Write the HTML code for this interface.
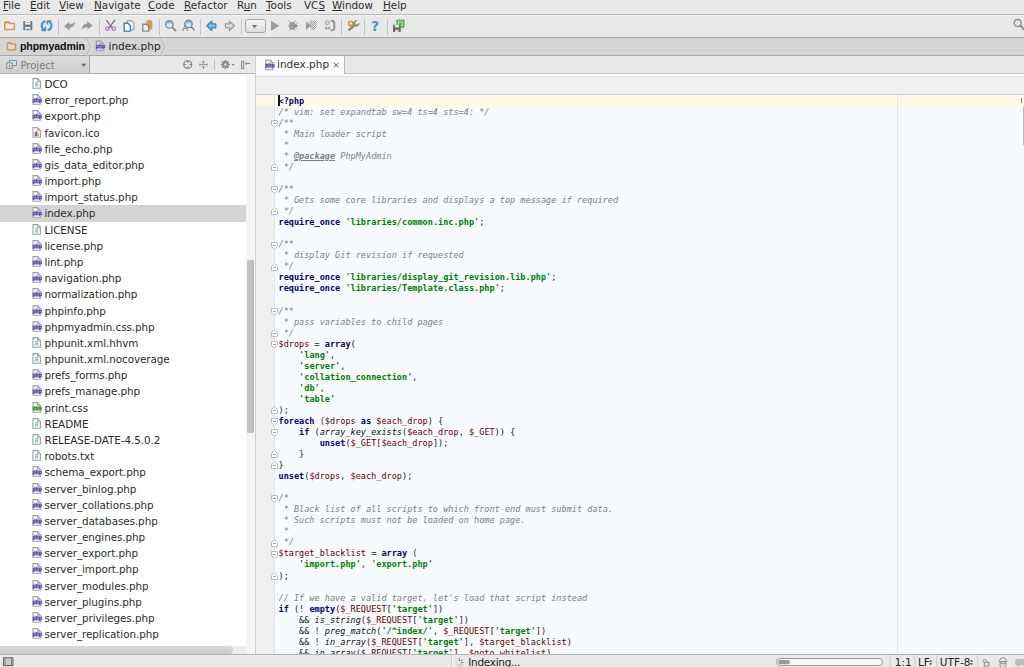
<!DOCTYPE html>
<html lang="en"><head><meta charset="utf-8"><title>phpmyadmin - index.php - PhpStorm</title>
<style>
*{box-sizing:border-box;margin:0;padding:0}
html,body{width:1024px;height:667px;overflow:hidden}
body{position:relative;background:#e8e8e8;font-family:"DejaVu Sans","Liberation Sans",sans-serif;font-size:10.5px;color:#1c1c1c}
.abs{position:absolute}
#menubar{position:absolute;left:0;top:0;width:1024px;height:15px;background:#e9e9e9;border-bottom:1px solid #b9b9b9}
.mi{position:absolute;top:-2.5px;font-size:10.4px;line-height:14px;color:#2e2e2e;white-space:nowrap}
.mi u{text-decoration:underline;text-underline-offset:1px}
#toolbar{position:absolute;left:0;top:15px;width:1024px;height:23px;background:#e9e9e9;border-top:1px solid #f4f4f4;border-bottom:1px solid #a8a8a8}
.tsep{position:absolute;top:3px;width:1px;height:16px;background:#c6c6c6}
.ti{position:absolute;top:5px}
#navbar{position:absolute;left:0;top:38px;width:1024px;height:18px;background:#d4d4d4;border-bottom:1px solid #a6a6a6}
#navbar span{position:absolute;top:0;line-height:16px;white-space:nowrap}
#phead{position:absolute;left:0;top:56px;width:256px;height:18px;background:#e8e8e8;border-bottom:1px solid #b4b4b4}
#ptab{position:absolute;left:0;top:0;width:90px;height:17px;background:linear-gradient(#dcdcdc,#cfcfcf);border-right:1px solid #a9a9a9}
#ptab span{position:absolute;left:20.5px;top:1px;line-height:17px;font-size:10px;color:#7c7c7c}
#tree{position:absolute;left:0;top:74px;width:246px;height:572px;background:#fff;overflow:hidden}
.row{position:absolute;left:0;width:246px;height:16.2px;margin-top:-74px;white-space:nowrap}
.row.sel{background:#d4d4d4}
.fi{position:absolute;left:31.6px;top:2px}
.fn{position:absolute;left:44.5px;top:0;line-height:16px;font-size:10.4px;letter-spacing:-.08px;color:#2c2c2c}
#vscroll{position:absolute;left:246px;top:74px;width:9px;height:580px;background:#f5f5f5}
#vthumb{position:absolute;left:.7px;top:186px;width:7.4px;height:173px;background:linear-gradient(90deg,#c6c6c6,#b9b9b9);border-radius:1px}
#hscroll{position:absolute;left:0;top:646px;width:246px;height:8px;background:#ececec}
#hthumb{position:absolute;left:0;top:0;width:233px;height:8px;background:linear-gradient(#dadada,#cbcbcb);border-radius:0 4px 4px 0}
#split{position:absolute;left:255px;top:56px;width:1px;height:598px;background:#cfcfcf}
#tabs{position:absolute;left:256px;top:56px;width:768px;height:18px;background:#e8e8e8;border-bottom:1px solid #c3c3c3}
#tab1{position:absolute;left:0;top:0;width:89px;height:18px;background:#fcfcfc;z-index:2;border-right:1px solid #b9b9b9}
#tab1 span{position:absolute;left:21px;top:0;line-height:17px;color:#333}
#edtop{position:absolute;left:256px;top:74px;width:768px;height:21px;background:linear-gradient(#f8f8f8 0,#f8f8f8 2px,#e4e4e4 2px,#e4e4e4 3px,#f0f0f0 3px);border-bottom:1px solid #d0d0d0}
#editor{position:absolute;left:256px;top:95px;width:768px;height:559px;background:#f7faff;overflow:hidden}
#gutter{position:absolute;left:0;top:0;width:19px;height:559px;background:#f0f0f0;border-right:1px solid #e3e3e3}
#curline{position:absolute;left:0;top:0;width:768px;height:11px;background:#fffae3}
#curgut{position:absolute;left:0;top:0;width:18px;height:11px;background:#fdf6e0}
#caret{position:absolute;left:22px;top:0;width:2px;height:11px;background:#111}
#margin{position:absolute;left:641px;top:0;width:1px;height:559px;background:#e6e6ea}
.cl{position:absolute;left:22.5px;height:11px;line-height:11px;white-space:pre;font-family:"DejaVu Sans Mono","Liberation Mono",monospace;font-size:8.55px;color:#1a1a1a}
.cl b.k{color:#000080}
.cl b.s{color:#008000}
.cl i.c{color:#808080}
.cl i.c b.t{text-decoration:underline}
.cl .v{color:#660000}
.cl i.f{color:#111}
.fold{position:absolute;left:15px;margin-top:.2px}
#status{position:absolute;left:0;top:654px;width:1024px;height:13px;background:#e9e9e9;border-top:1px solid #b4b4b4}
#status span{position:absolute;top:0px;line-height:14px;font-size:10.5px;color:#222;white-space:nowrap}
</style></head><body>
<div id="menubar">
<span class="mi" style="left:3px"><u>F</u>ile</span>
<span class="mi" style="left:30px"><u>E</u>dit</span>
<span class="mi" style="left:59px"><u>V</u>iew</span>
<span class="mi" style="left:94px"><u>N</u>avigate</span>
<span class="mi" style="left:148px"><u>C</u>ode</span>
<span class="mi" style="left:184px"><u>R</u>efactor</span>
<span class="mi" style="left:237px">R<u>u</u>n</span>
<span class="mi" style="left:266px"><u>T</u>ools</span>
<span class="mi" style="left:304px">VC<u>S</u></span>
<span class="mi" style="left:332px"><u>W</u>indow</span>
<span class="mi" style="left:383px"><u>H</u>elp</span>
</div>
<div id="toolbar">
<i class="tsep" style="left:58px"></i><i class="tsep" style="left:99px"></i><i class="tsep" style="left:159px"></i><i class="tsep" style="left:200px"></i><i class="tsep" style="left:241px"></i><i class="tsep" style="left:341px"></i><i class="tsep" style="left:364px"></i><i class="tsep" style="left:387px"></i>
</div>
<svg id="tbicons" width="1024" height="24" viewBox="0 14 1024 24" style="position:absolute;left:0;top:14px">
<defs>
<linearGradient id="lens" x1="0" y1="0" x2="0" y2="1"><stop offset="0" stop-color="#4fa6e6"/><stop offset=".55" stop-color="#cfe6f8"/><stop offset="1" stop-color="#f4f8fc"/></linearGradient>
<linearGradient id="cb" x1="0" y1="0" x2="0" y2="1"><stop offset="0" stop-color="#f6f6f6"/><stop offset="1" stop-color="#dcdcdc"/></linearGradient>
<pattern id="chk" width="2" height="2" patternUnits="userSpaceOnUse"><rect width="1" height="1" fill="#999"/><rect x="1" y="1" width="1" height="1" fill="#999"/></pattern>
</defs>
<!-- open folder -->
<path d="M4.8 22h4.2l1 1.6h4.4v6h-9.6z" fill="#f1eeea" stroke="#d19a55" stroke-width="1.5" stroke-linejoin="round"/>
<path d="M4.8 21.6h4.4l.9 1.8h-5.3z" fill="#d19a55"/>
<!-- save -->
<path d="M23.3 21h9v9.2h-9z" fill="#7c7c7c"/>
<rect x="25.3" y="21" width="5" height="3.6" fill="#f1f1f1"/>
<rect x="26.8" y="22" width="2" height="1" fill="#8a8a8a"/>
<rect x="25.3" y="27" width="5" height="3.2" fill="#e9f1f8"/>
<rect x="26.2" y="28.6" width="3.2" height="1.6" fill="#3f97dd"/>
<!-- sync -->
<g fill="none" stroke="#4293cb" stroke-width="2">
<path d="M45.400 21.300a4.500 4.500 0 0 0 -.6 8.700"/>
<path d="M47.600 30.100a4.500 4.500 0 0 0 .8 -8.700"/>
</g>
<path d="M46.600 20.200h4.800v1.900h-3.100v2.500h-1.700z" fill="#4293cb"/>
<path d="M46.200 31.200h-4.800v-1.900h3.100v-2.500h1.700z" fill="#4293cb"/>
<!-- undo -->
<path id="undo" d="M64.100 26.200l5.100-4.200v2.300c2.300 0 4.300-.8 5.550-2.500c.15 3.700-1.950 6.100-5.350 6.200l.2 2.400z" fill="#9b9b9b"/>
<path d="M64.100 26.200l5.100-4.200v2.300c2.300 0 4.300-.8 5.550-2.500c.15 3.700-1.950 6.100-5.350 6.200l.2 2.400z" fill="#9b9b9b" transform="rotate(180 78.400 25.800)"/>
<!-- cut -->
<g fill="none" stroke="#6c6c6c" stroke-width="1.150" stroke-linecap="round">
<path d="M106.600 20.300l6 8"/><path d="M114.600 20.300l-6 8"/>
</g>
<g fill="none" stroke="#b877cc" stroke-width="1.300">
<circle cx="107.400" cy="28.600" r="1.800"/><circle cx="113.800" cy="28.600" r="1.800"/>
</g>
<!-- copy -->
<path d="M127.500 20.800h4l2.400 2.400v6.400h-6.400z" fill="#f5f5f5" stroke="#9a9a9a" stroke-width="1.100"/>
<path d="M124.200 23.300h3.800l2.400 2.400v5.400h-6.200z" fill="#fdfdfd" stroke="#3b80b6" stroke-width="1.400"/>
<!-- paste -->
<path d="M146.300 20.800h6v8.600h-6z" fill="#d69a48"/>
<rect x="148" y="19.900" width="2.800" height="1.500" fill="#a7a7a7"/>
<path d="M142.800 24.300h3.600l2.300 2.300v4.500h-5.900z" fill="#f4f4f4" stroke="#8b8b8b" stroke-width="1.400"/>
<!-- find -->
<path d="M172.600 27.600l3 3" stroke="#8a8a8a" stroke-width="2" stroke-linecap="round"/>
<circle cx="169.400" cy="24.400" r="3.700" fill="url(#lens)" stroke="#8a8a8a" stroke-width="1.400"/>
<!-- replace -->
<path d="M191.300 26.900l2.600 2.600" stroke="#8a8a8a" stroke-width="1.800" stroke-linecap="round"/>
<circle cx="188.500" cy="23.900" r="3.600" fill="url(#lens)" stroke="#8a8a8a" stroke-width="1.400"/>
<text x="182.300" y="31.400" font-size="8.500" font-family="Liberation Sans, sans-serif" fill="#5a5a5a">A</text>
<!-- back / forward -->
<path d="M206.900 25.800l4.800-4.600v2.700h4.100v3.900h-4.100v2.700z" fill="#7cbdea" stroke="#2f86c6" stroke-width="1.300" stroke-linejoin="round"/>
<path d="M234.300 25.800l-4.800-4.600v2.700h-4.100v3.900h4.100v2.700z" fill="#dedede" stroke="#9a9a9a" stroke-width="1.300" stroke-linejoin="round"/>
<!-- combobox -->
<rect x="245.500" y="19.500" width="20" height="13" rx="2.200" fill="url(#cb)" stroke="#a6a6a6"/>
<path d="M251.900 25.100h5.300l-2.650 3.100z" fill="#767676"/>
<!-- run -->
<path d="M271 20.600l8.200 5.250l-8.200 5.250z" fill="#9c9c9c"/>
<!-- debug -->
<g fill="#9b9b9b" stroke="#9b9b9b">
<ellipse cx="292.400" cy="26" rx="3.300" ry="3.900" stroke="none"/>
<circle cx="295.600" cy="25.800" r="1.700" stroke="none" fill="#8c8c8c"/>
<g fill="none" stroke-width=".9"><path d="M290.500 23l-1.800-2.200M294 22.700l1.600-2.200M289.300 26h-1.500M290.500 29l-1.600 1.600M294.200 29.300l1.300 1.400M296.500 23.800l1.600-1.200M296.500 28l1.600 1.200M297.300 25.900h1"/></g>
</g>
<!-- coverage -->
<path d="M305.900 21.500l5.200 4.100l-5.200 4.100z" fill="#999"/>
<path d="M309.500 20.600h7.200v5.500q-.5 3.300-3.600 4.400q-3.100-1.100-3.600-4.400z" fill="url(#chk)"/>
<!-- listen -->
<g fill="none" stroke="#a2a2a2">
<circle cx="327.200" cy="22.600" r="2.100" stroke-width="1"/>
<path d="M326.300 22.600l.8.800l1.200-1.600" stroke-width=".8"/>
<path d="M330.800 21h1.400q2.100.3 2.100 2.300v4.600q0 2-2.100 2.300h-1.400" stroke-width="2.200" stroke="#9a9a9a"/>
<path d="M325 28.200h5M326.600 26.700l-1.600 1.500l1.600 1.500M328.600 26.700l1.600 1.500l-1.600 1.500" stroke-width="1" stroke="#8f8f8f"/>
</g>
<!-- settings wrench -->
<path d="M349.300 31.300l-1.500-1.500l5.300-5.200q-.7-2.400 1-3.700q1.500-1 3.100-.5l-2 2l.5 1.600l1.600.5l2-2q.6 1.700-.6 3.100q-1.400 1.500-3.600 1z" fill="#8b8b8b"/>
<circle cx="350.700" cy="23.400" r="2.200" fill="#f2e6d4" stroke="#d39239" stroke-width="1.500"/>
<!-- help -->
<text x="371" y="30.800" font-size="14" font-weight="bold" font-family="DejaVu Sans, Liberation Sans, sans-serif" fill="#4293cb">?</text>
<!-- last -->
<rect x="396.800" y="20.200" width="7.200" height="7.200" fill="#4fae50"/>
<g stroke="#4fae50" stroke-width="1" stroke-dasharray="1 1"><path d="M396.800 19.700h7.200M396.800 27.900h7.200M396.300 20.200v7.200M404.500 20.200v7.200"/></g>
<rect x="398.600" y="22" width="3.600" height="3.600" fill="none" stroke="#d5f0d5" stroke-width=".9"/>
<rect x="393" y="24.800" width="7.800" height="7.200" fill="#6a6a6a"/>
<rect x="394.800" y="24.800" width="4.200" height="2.600" fill="#e9e9e9"/>
<rect x="395.200" y="29.800" width="3.400" height="2.200" fill="#dcdcdc"/>
<!-- search everywhere -->
<circle cx="1017.700" cy="22.900" r="3.500" fill="none" stroke="#8c8c8c" stroke-width="1.500"/>
<path d="M1020.300 25.600l4.500 4.500" stroke="#8c8c8c" stroke-width="2"/>
</svg>

<div id="navbar">
<span style="left:20px;font-family:'Liberation Sans',sans-serif;font-weight:bold;color:#111;font-size:10.6px;letter-spacing:-.1px">phpmyadmin</span>
<span style="left:108.5px;color:#222">index.php</span>
</div>
<div id="phead"><div id="ptab"><span>Project</span></div></div>
<div id="tree">
<div class="row" style="top:76.00px"><svg class="fi" width="11" height="12" viewBox="0 0 11 12"><path d="M1 .6h4.6l2.800 2.800v6.900h-7.400z" fill="#fdfdfd" stroke="#9e9e9e" stroke-width="1.100"/><path d="M5.600 .6v2.800h2.800" fill="none" stroke="#9e9e9e" stroke-width=".9"/><path d="M3 4.700h3.400M3 6.300h3.400M3 7.900h3.400" stroke="#58a6dc" stroke-width=".9"/></svg><span class="fn">DCO</span></div>
<div class="row" style="top:92.18px"><svg class="fi" width="11" height="12" viewBox="0 0 11 12"><path d="M1 .6h4.6l2.800 2.800v6.900h-7.400z" fill="#fdfdfd" stroke="#9e9e9e" stroke-width="1.100"/><path d="M5.600 .6v2.800h2.800" fill="none" stroke="#9e9e9e" stroke-width=".9"/><rect x=".5" y="3.800" width="9.500" height="5" fill="#b5a9f3"/><text x="5.200" y="7.900" font-size="5.200" font-weight="bold" text-anchor="middle" fill="#3b2c86" font-family="Liberation Sans, sans-serif">php</text></svg><span class="fn">error_report.php</span></div>
<div class="row" style="top:108.36px"><svg class="fi" width="11" height="12" viewBox="0 0 11 12"><path d="M1 .6h4.6l2.800 2.800v6.900h-7.400z" fill="#fdfdfd" stroke="#9e9e9e" stroke-width="1.100"/><path d="M5.600 .6v2.800h2.800" fill="none" stroke="#9e9e9e" stroke-width=".9"/><rect x=".5" y="3.800" width="9.500" height="5" fill="#b5a9f3"/><text x="5.200" y="7.900" font-size="5.200" font-weight="bold" text-anchor="middle" fill="#3b2c86" font-family="Liberation Sans, sans-serif">php</text></svg><span class="fn">export.php</span></div>
<div class="row" style="top:124.54px"><svg class="fi" width="11" height="12" viewBox="0 0 11 12"><path d="M1 .6h4.6l2.800 2.800v6.900h-7.400z" fill="#fdfdfd" stroke="#9e9e9e" stroke-width="1.100"/><path d="M5.600 .6v2.800h2.800" fill="none" stroke="#9e9e9e" stroke-width=".9"/><rect x="2.600" y="5" width="1.400" height="4.200" fill="#4a82c4"/><rect x="4" y="4.200" width="1.400" height="5" fill="#d8502c"/><rect x="5.400" y="5.600" width="1.300" height="3.600" fill="#eaa23c"/></svg><span class="fn">favicon.ico</span></div>
<div class="row" style="top:140.72px"><svg class="fi" width="11" height="12" viewBox="0 0 11 12"><path d="M1 .6h4.6l2.800 2.800v6.900h-7.400z" fill="#fdfdfd" stroke="#9e9e9e" stroke-width="1.100"/><path d="M5.600 .6v2.800h2.800" fill="none" stroke="#9e9e9e" stroke-width=".9"/><rect x=".5" y="3.800" width="9.500" height="5" fill="#b5a9f3"/><text x="5.200" y="7.900" font-size="5.200" font-weight="bold" text-anchor="middle" fill="#3b2c86" font-family="Liberation Sans, sans-serif">php</text></svg><span class="fn">file_echo.php</span></div>
<div class="row" style="top:156.90px"><svg class="fi" width="11" height="12" viewBox="0 0 11 12"><path d="M1 .6h4.6l2.800 2.800v6.900h-7.400z" fill="#fdfdfd" stroke="#9e9e9e" stroke-width="1.100"/><path d="M5.600 .6v2.800h2.800" fill="none" stroke="#9e9e9e" stroke-width=".9"/><rect x=".5" y="3.800" width="9.500" height="5" fill="#b5a9f3"/><text x="5.200" y="7.900" font-size="5.200" font-weight="bold" text-anchor="middle" fill="#3b2c86" font-family="Liberation Sans, sans-serif">php</text></svg><span class="fn">gis_data_editor.php</span></div>
<div class="row" style="top:173.08px"><svg class="fi" width="11" height="12" viewBox="0 0 11 12"><path d="M1 .6h4.6l2.800 2.800v6.900h-7.400z" fill="#fdfdfd" stroke="#9e9e9e" stroke-width="1.100"/><path d="M5.600 .6v2.800h2.800" fill="none" stroke="#9e9e9e" stroke-width=".9"/><rect x=".5" y="3.800" width="9.500" height="5" fill="#b5a9f3"/><text x="5.200" y="7.900" font-size="5.200" font-weight="bold" text-anchor="middle" fill="#3b2c86" font-family="Liberation Sans, sans-serif">php</text></svg><span class="fn">import.php</span></div>
<div class="row" style="top:189.26px"><svg class="fi" width="11" height="12" viewBox="0 0 11 12"><path d="M1 .6h4.6l2.800 2.800v6.900h-7.400z" fill="#fdfdfd" stroke="#9e9e9e" stroke-width="1.100"/><path d="M5.600 .6v2.800h2.800" fill="none" stroke="#9e9e9e" stroke-width=".9"/><rect x=".5" y="3.800" width="9.500" height="5" fill="#b5a9f3"/><text x="5.200" y="7.900" font-size="5.200" font-weight="bold" text-anchor="middle" fill="#3b2c86" font-family="Liberation Sans, sans-serif">php</text></svg><span class="fn">import_status.php</span></div>
<div class="row sel" style="top:205.44px"><svg class="fi" width="11" height="12" viewBox="0 0 11 12"><path d="M1 .6h4.6l2.800 2.800v6.900h-7.400z" fill="#fdfdfd" stroke="#9e9e9e" stroke-width="1.100"/><path d="M5.600 .6v2.800h2.800" fill="none" stroke="#9e9e9e" stroke-width=".9"/><rect x=".5" y="3.800" width="9.500" height="5" fill="#b5a9f3"/><text x="5.200" y="7.900" font-size="5.200" font-weight="bold" text-anchor="middle" fill="#3b2c86" font-family="Liberation Sans, sans-serif">php</text></svg><span class="fn">index.php</span></div>
<div class="row" style="top:221.62px"><svg class="fi" width="11" height="12" viewBox="0 0 11 12"><path d="M1 .6h4.6l2.800 2.800v6.900h-7.400z" fill="#fdfdfd" stroke="#9e9e9e" stroke-width="1.100"/><path d="M5.600 .6v2.800h2.800" fill="none" stroke="#9e9e9e" stroke-width=".9"/><path d="M3 4.700h3.400M3 6.300h3.400M3 7.900h3.400" stroke="#58a6dc" stroke-width=".9"/></svg><span class="fn">LICENSE</span></div>
<div class="row" style="top:237.80px"><svg class="fi" width="11" height="12" viewBox="0 0 11 12"><path d="M1 .6h4.6l2.800 2.800v6.900h-7.400z" fill="#fdfdfd" stroke="#9e9e9e" stroke-width="1.100"/><path d="M5.600 .6v2.800h2.800" fill="none" stroke="#9e9e9e" stroke-width=".9"/><rect x=".5" y="3.800" width="9.500" height="5" fill="#b5a9f3"/><text x="5.200" y="7.900" font-size="5.200" font-weight="bold" text-anchor="middle" fill="#3b2c86" font-family="Liberation Sans, sans-serif">php</text></svg><span class="fn">license.php</span></div>
<div class="row" style="top:253.98px"><svg class="fi" width="11" height="12" viewBox="0 0 11 12"><path d="M1 .6h4.6l2.800 2.800v6.900h-7.400z" fill="#fdfdfd" stroke="#9e9e9e" stroke-width="1.100"/><path d="M5.600 .6v2.800h2.800" fill="none" stroke="#9e9e9e" stroke-width=".9"/><rect x=".5" y="3.800" width="9.500" height="5" fill="#b5a9f3"/><text x="5.200" y="7.900" font-size="5.200" font-weight="bold" text-anchor="middle" fill="#3b2c86" font-family="Liberation Sans, sans-serif">php</text></svg><span class="fn">lint.php</span></div>
<div class="row" style="top:270.16px"><svg class="fi" width="11" height="12" viewBox="0 0 11 12"><path d="M1 .6h4.6l2.800 2.800v6.900h-7.400z" fill="#fdfdfd" stroke="#9e9e9e" stroke-width="1.100"/><path d="M5.600 .6v2.800h2.800" fill="none" stroke="#9e9e9e" stroke-width=".9"/><rect x=".5" y="3.800" width="9.500" height="5" fill="#b5a9f3"/><text x="5.200" y="7.900" font-size="5.200" font-weight="bold" text-anchor="middle" fill="#3b2c86" font-family="Liberation Sans, sans-serif">php</text></svg><span class="fn">navigation.php</span></div>
<div class="row" style="top:286.34px"><svg class="fi" width="11" height="12" viewBox="0 0 11 12"><path d="M1 .6h4.6l2.800 2.800v6.900h-7.400z" fill="#fdfdfd" stroke="#9e9e9e" stroke-width="1.100"/><path d="M5.600 .6v2.800h2.800" fill="none" stroke="#9e9e9e" stroke-width=".9"/><rect x=".5" y="3.800" width="9.500" height="5" fill="#b5a9f3"/><text x="5.200" y="7.900" font-size="5.200" font-weight="bold" text-anchor="middle" fill="#3b2c86" font-family="Liberation Sans, sans-serif">php</text></svg><span class="fn">normalization.php</span></div>
<div class="row" style="top:302.52px"><svg class="fi" width="11" height="12" viewBox="0 0 11 12"><path d="M1 .6h4.6l2.800 2.800v6.900h-7.400z" fill="#fdfdfd" stroke="#9e9e9e" stroke-width="1.100"/><path d="M5.600 .6v2.800h2.800" fill="none" stroke="#9e9e9e" stroke-width=".9"/><rect x=".5" y="3.800" width="9.500" height="5" fill="#b5a9f3"/><text x="5.200" y="7.900" font-size="5.200" font-weight="bold" text-anchor="middle" fill="#3b2c86" font-family="Liberation Sans, sans-serif">php</text></svg><span class="fn">phpinfo.php</span></div>
<div class="row" style="top:318.70px"><svg class="fi" width="11" height="12" viewBox="0 0 11 12"><path d="M1 .6h4.6l2.800 2.800v6.900h-7.400z" fill="#fdfdfd" stroke="#9e9e9e" stroke-width="1.100"/><path d="M5.600 .6v2.800h2.800" fill="none" stroke="#9e9e9e" stroke-width=".9"/><rect x=".5" y="3.800" width="9.500" height="5" fill="#b5a9f3"/><text x="5.200" y="7.900" font-size="5.200" font-weight="bold" text-anchor="middle" fill="#3b2c86" font-family="Liberation Sans, sans-serif">php</text></svg><span class="fn">phpmyadmin.css.php</span></div>
<div class="row" style="top:334.88px"><svg class="fi" width="11" height="12" viewBox="0 0 11 12"><path d="M1 .6h4.6l2.800 2.800v6.900h-7.400z" fill="#fdfdfd" stroke="#9e9e9e" stroke-width="1.100"/><path d="M5.600 .6v2.800h2.800" fill="none" stroke="#9e9e9e" stroke-width=".9"/><path d="M3 4.700h3.400M3 6.300h3.400M3 7.900h3.400" stroke="#58a6dc" stroke-width=".9"/></svg><span class="fn">phpunit.xml.hhvm</span></div>
<div class="row" style="top:351.06px"><svg class="fi" width="11" height="12" viewBox="0 0 11 12"><path d="M1 .6h4.6l2.800 2.800v6.900h-7.400z" fill="#fdfdfd" stroke="#9e9e9e" stroke-width="1.100"/><path d="M5.600 .6v2.800h2.800" fill="none" stroke="#9e9e9e" stroke-width=".9"/><path d="M3 4.700h3.400M3 6.300h3.400M3 7.900h3.400" stroke="#58a6dc" stroke-width=".9"/></svg><span class="fn">phpunit.xml.nocoverage</span></div>
<div class="row" style="top:367.24px"><svg class="fi" width="11" height="12" viewBox="0 0 11 12"><path d="M1 .6h4.6l2.800 2.800v6.900h-7.400z" fill="#fdfdfd" stroke="#9e9e9e" stroke-width="1.100"/><path d="M5.600 .6v2.800h2.800" fill="none" stroke="#9e9e9e" stroke-width=".9"/><rect x=".5" y="3.800" width="9.500" height="5" fill="#b5a9f3"/><text x="5.200" y="7.900" font-size="5.200" font-weight="bold" text-anchor="middle" fill="#3b2c86" font-family="Liberation Sans, sans-serif">php</text></svg><span class="fn">prefs_forms.php</span></div>
<div class="row" style="top:383.42px"><svg class="fi" width="11" height="12" viewBox="0 0 11 12"><path d="M1 .6h4.6l2.800 2.800v6.900h-7.400z" fill="#fdfdfd" stroke="#9e9e9e" stroke-width="1.100"/><path d="M5.600 .6v2.800h2.800" fill="none" stroke="#9e9e9e" stroke-width=".9"/><rect x=".5" y="3.800" width="9.500" height="5" fill="#b5a9f3"/><text x="5.200" y="7.900" font-size="5.200" font-weight="bold" text-anchor="middle" fill="#3b2c86" font-family="Liberation Sans, sans-serif">php</text></svg><span class="fn">prefs_manage.php</span></div>
<div class="row" style="top:399.60px"><svg class="fi" width="11" height="12" viewBox="0 0 11 12"><path d="M1 .6h4.6l2.800 2.800v6.900h-7.400z" fill="#fdfdfd" stroke="#9e9e9e" stroke-width="1.100"/><path d="M5.600 .6v2.800h2.800" fill="none" stroke="#9e9e9e" stroke-width=".9"/><rect x=".5" y="3.800" width="9.500" height="5" fill="#7fcf74"/><text x="5.200" y="7.800" font-size="5.200" font-weight="bold" text-anchor="middle" fill="#1f5e1a" font-family="Liberation Sans, sans-serif">css</text></svg><span class="fn">print.css</span></div>
<div class="row" style="top:415.78px"><svg class="fi" width="11" height="12" viewBox="0 0 11 12"><path d="M1 .6h4.6l2.800 2.800v6.900h-7.400z" fill="#fdfdfd" stroke="#9e9e9e" stroke-width="1.100"/><path d="M5.600 .6v2.800h2.800" fill="none" stroke="#9e9e9e" stroke-width=".9"/><path d="M3 4.700h3.400M3 6.300h3.400M3 7.900h3.400" stroke="#58a6dc" stroke-width=".9"/></svg><span class="fn">README</span></div>
<div class="row" style="top:431.96px"><svg class="fi" width="11" height="12" viewBox="0 0 11 12"><path d="M1 .6h4.6l2.800 2.800v6.900h-7.400z" fill="#fdfdfd" stroke="#9e9e9e" stroke-width="1.100"/><path d="M5.600 .6v2.800h2.800" fill="none" stroke="#9e9e9e" stroke-width=".9"/><path d="M3 4.700h3.400M3 6.300h3.400M3 7.900h3.400" stroke="#58a6dc" stroke-width=".9"/></svg><span class="fn">RELEASE-DATE-4.5.0.2</span></div>
<div class="row" style="top:448.14px"><svg class="fi" width="11" height="12" viewBox="0 0 11 12"><path d="M1 .6h4.6l2.800 2.800v6.900h-7.400z" fill="#fdfdfd" stroke="#9e9e9e" stroke-width="1.100"/><path d="M5.600 .6v2.800h2.800" fill="none" stroke="#9e9e9e" stroke-width=".9"/><path d="M3 4.700h3.400M3 6.300h3.400M3 7.900h3.400" stroke="#58a6dc" stroke-width=".9"/></svg><span class="fn">robots.txt</span></div>
<div class="row" style="top:464.32px"><svg class="fi" width="11" height="12" viewBox="0 0 11 12"><path d="M1 .6h4.6l2.800 2.800v6.900h-7.400z" fill="#fdfdfd" stroke="#9e9e9e" stroke-width="1.100"/><path d="M5.600 .6v2.800h2.800" fill="none" stroke="#9e9e9e" stroke-width=".9"/><rect x=".5" y="3.800" width="9.500" height="5" fill="#b5a9f3"/><text x="5.200" y="7.900" font-size="5.200" font-weight="bold" text-anchor="middle" fill="#3b2c86" font-family="Liberation Sans, sans-serif">php</text></svg><span class="fn">schema_export.php</span></div>
<div class="row" style="top:480.50px"><svg class="fi" width="11" height="12" viewBox="0 0 11 12"><path d="M1 .6h4.6l2.800 2.800v6.900h-7.400z" fill="#fdfdfd" stroke="#9e9e9e" stroke-width="1.100"/><path d="M5.600 .6v2.800h2.800" fill="none" stroke="#9e9e9e" stroke-width=".9"/><rect x=".5" y="3.800" width="9.500" height="5" fill="#b5a9f3"/><text x="5.200" y="7.900" font-size="5.200" font-weight="bold" text-anchor="middle" fill="#3b2c86" font-family="Liberation Sans, sans-serif">php</text></svg><span class="fn">server_binlog.php</span></div>
<div class="row" style="top:496.68px"><svg class="fi" width="11" height="12" viewBox="0 0 11 12"><path d="M1 .6h4.6l2.800 2.800v6.900h-7.400z" fill="#fdfdfd" stroke="#9e9e9e" stroke-width="1.100"/><path d="M5.600 .6v2.800h2.800" fill="none" stroke="#9e9e9e" stroke-width=".9"/><rect x=".5" y="3.800" width="9.500" height="5" fill="#b5a9f3"/><text x="5.200" y="7.900" font-size="5.200" font-weight="bold" text-anchor="middle" fill="#3b2c86" font-family="Liberation Sans, sans-serif">php</text></svg><span class="fn">server_collations.php</span></div>
<div class="row" style="top:512.86px"><svg class="fi" width="11" height="12" viewBox="0 0 11 12"><path d="M1 .6h4.6l2.800 2.800v6.900h-7.400z" fill="#fdfdfd" stroke="#9e9e9e" stroke-width="1.100"/><path d="M5.600 .6v2.800h2.800" fill="none" stroke="#9e9e9e" stroke-width=".9"/><rect x=".5" y="3.800" width="9.500" height="5" fill="#b5a9f3"/><text x="5.200" y="7.900" font-size="5.200" font-weight="bold" text-anchor="middle" fill="#3b2c86" font-family="Liberation Sans, sans-serif">php</text></svg><span class="fn">server_databases.php</span></div>
<div class="row" style="top:529.04px"><svg class="fi" width="11" height="12" viewBox="0 0 11 12"><path d="M1 .6h4.6l2.800 2.800v6.900h-7.400z" fill="#fdfdfd" stroke="#9e9e9e" stroke-width="1.100"/><path d="M5.600 .6v2.800h2.800" fill="none" stroke="#9e9e9e" stroke-width=".9"/><rect x=".5" y="3.800" width="9.500" height="5" fill="#b5a9f3"/><text x="5.200" y="7.900" font-size="5.200" font-weight="bold" text-anchor="middle" fill="#3b2c86" font-family="Liberation Sans, sans-serif">php</text></svg><span class="fn">server_engines.php</span></div>
<div class="row" style="top:545.22px"><svg class="fi" width="11" height="12" viewBox="0 0 11 12"><path d="M1 .6h4.6l2.800 2.800v6.900h-7.400z" fill="#fdfdfd" stroke="#9e9e9e" stroke-width="1.100"/><path d="M5.600 .6v2.800h2.800" fill="none" stroke="#9e9e9e" stroke-width=".9"/><rect x=".5" y="3.800" width="9.500" height="5" fill="#b5a9f3"/><text x="5.200" y="7.900" font-size="5.200" font-weight="bold" text-anchor="middle" fill="#3b2c86" font-family="Liberation Sans, sans-serif">php</text></svg><span class="fn">server_export.php</span></div>
<div class="row" style="top:561.40px"><svg class="fi" width="11" height="12" viewBox="0 0 11 12"><path d="M1 .6h4.6l2.800 2.800v6.900h-7.400z" fill="#fdfdfd" stroke="#9e9e9e" stroke-width="1.100"/><path d="M5.600 .6v2.800h2.800" fill="none" stroke="#9e9e9e" stroke-width=".9"/><rect x=".5" y="3.800" width="9.500" height="5" fill="#b5a9f3"/><text x="5.200" y="7.900" font-size="5.200" font-weight="bold" text-anchor="middle" fill="#3b2c86" font-family="Liberation Sans, sans-serif">php</text></svg><span class="fn">server_import.php</span></div>
<div class="row" style="top:577.58px"><svg class="fi" width="11" height="12" viewBox="0 0 11 12"><path d="M1 .6h4.6l2.800 2.800v6.900h-7.400z" fill="#fdfdfd" stroke="#9e9e9e" stroke-width="1.100"/><path d="M5.600 .6v2.800h2.800" fill="none" stroke="#9e9e9e" stroke-width=".9"/><rect x=".5" y="3.800" width="9.500" height="5" fill="#b5a9f3"/><text x="5.200" y="7.900" font-size="5.200" font-weight="bold" text-anchor="middle" fill="#3b2c86" font-family="Liberation Sans, sans-serif">php</text></svg><span class="fn">server_modules.php</span></div>
<div class="row" style="top:593.76px"><svg class="fi" width="11" height="12" viewBox="0 0 11 12"><path d="M1 .6h4.6l2.800 2.800v6.900h-7.400z" fill="#fdfdfd" stroke="#9e9e9e" stroke-width="1.100"/><path d="M5.600 .6v2.800h2.800" fill="none" stroke="#9e9e9e" stroke-width=".9"/><rect x=".5" y="3.800" width="9.500" height="5" fill="#b5a9f3"/><text x="5.200" y="7.900" font-size="5.200" font-weight="bold" text-anchor="middle" fill="#3b2c86" font-family="Liberation Sans, sans-serif">php</text></svg><span class="fn">server_plugins.php</span></div>
<div class="row" style="top:609.94px"><svg class="fi" width="11" height="12" viewBox="0 0 11 12"><path d="M1 .6h4.6l2.800 2.800v6.900h-7.400z" fill="#fdfdfd" stroke="#9e9e9e" stroke-width="1.100"/><path d="M5.600 .6v2.800h2.800" fill="none" stroke="#9e9e9e" stroke-width=".9"/><rect x=".5" y="3.800" width="9.500" height="5" fill="#b5a9f3"/><text x="5.200" y="7.900" font-size="5.200" font-weight="bold" text-anchor="middle" fill="#3b2c86" font-family="Liberation Sans, sans-serif">php</text></svg><span class="fn">server_privileges.php</span></div>
<div class="row" style="top:626.12px"><svg class="fi" width="11" height="12" viewBox="0 0 11 12"><path d="M1 .6h4.6l2.800 2.800v6.900h-7.400z" fill="#fdfdfd" stroke="#9e9e9e" stroke-width="1.100"/><path d="M5.600 .6v2.800h2.800" fill="none" stroke="#9e9e9e" stroke-width=".9"/><rect x=".5" y="3.800" width="9.500" height="5" fill="#b5a9f3"/><text x="5.200" y="7.900" font-size="5.200" font-weight="bold" text-anchor="middle" fill="#3b2c86" font-family="Liberation Sans, sans-serif">php</text></svg><span class="fn">server_replication.php</span></div>
</div>
<div id="vscroll"><div id="vthumb"></div></div>
<div id="hscroll"><div id="hthumb"></div></div>
<div id="split"></div>
<div id="tabs"><div id="tab1"><span>index.php</span></div></div>
<div id="edtop"></div>
<svg id="hdicons" width="1024" height="38" viewBox="0 38 1024 38" style="position:absolute;left:0;top:38px;z-index:3">
<!-- nav folder -->
<path d="M7.400 42.800h3.600l.9 1.500h3.700v5.500h-8.200z" fill="#e0ddd8" stroke="#d19a55" stroke-width="1.500" stroke-linejoin="round"/>
<path d="M7.400 42.300h3.800l.9 1.800h-4.700z" fill="#d19a55"/>
<!-- chevrons -->
<path d="M86.500 38l4.500 8.750l-4.500 8.750" fill="none" stroke="#b2b2b2" stroke-width="1"/>
<path d="M87.600 38l4.500 8.750l-4.500 8.750" fill="none" stroke="#e6e6e6" stroke-width="1"/>
<path d="M160.800 38l4.500 8.750l-4.500 8.750" fill="none" stroke="#b2b2b2" stroke-width="1"/>
<path d="M161.900 38l4.500 8.750l-4.500 8.750" fill="none" stroke="#e6e6e6" stroke-width="1"/>
<!-- nav php icon -->
<g transform="translate(95.300 40.500)"><path d="M1 .6h4.600l2.800 2.800v6.900h-7.400z" fill="none" stroke="#9e9e9e" stroke-width="1.100"/><path d="M5.600 .6v2.800h2.800" fill="none" stroke="#9e9e9e" stroke-width=".9"/><rect x=".5" y="3.800" width="9.500" height="5" fill="#b5a9f3"/><text x="5.200" y="7.900" font-size="5.200" font-weight="bold" text-anchor="middle" fill="#3b2c86" font-family="Liberation Sans, sans-serif">php</text></g>
<!-- project tool window icon -->
<rect x="9.500" y="60.500" width="7" height="5" fill="#cfe4f5" stroke="#5a9bd0"/>
<rect x="6.800" y="62.800" width="5.400" height="5.700" fill="#e4e4e4" stroke="#8a8a8a"/>
<rect x="8.800" y="64.800" width="1.400" height="2.600" fill="#8a8a8a"/>
<path d="M81 63.800h5.400l-2.700 3.100z" fill="#6f6f6f"/>
<!-- locate -->
<g fill="none" stroke="#8a8a8a">
<circle cx="187.700" cy="64.500" r="3.900" stroke-width="1.300"/>
<path d="M187.700 60.600v2.400M187.700 68.400v-2.400M183.800 64.500h2.400M191.600 64.500h-2.400" stroke-width="1.100"/>
</g>
<!-- collapse -->
<g fill="none" stroke="#929292" stroke-width="1">
<path d="M199.300 64.600h8.600"/><path d="M203.500 60.300v3M203.500 69v-3"/><path d="M202 61.800l1.500 1.500l1.500-1.500M202 67.500l1.500-1.500l1.500 1.500" stroke-width=".9"/>
<path d="M199.600 63.300q1.500 1.300 0 2.600M207.500 63.300q-1.500 1.300 0 2.600" stroke-width=".7"/>
</g>
<rect x="214" y="59.500" width="1" height="10" fill="#c2c2c2"/>
<!-- gear -->
<g transform="translate(225.400 64.500)">
<g stroke="#858585" stroke-width="1.700"><path d="M0-4.500v9M-4.500 0h9M-3.200-3.200l6.400 6.400M-3.200 3.200l6.400-6.400"/></g>
<circle r="3" fill="#858585"/><circle r="1.300" fill="#e6e6e6"/>
</g>
<path d="M231.500 64h3.200l-1.600 2.100z" fill="#858585"/>
<!-- hide -->
<rect x="241.500" y="61.300" width="2.200" height="7.300" fill="#e0e0e0" stroke="#8c8c8c" stroke-width="1"/>
<path d="M245.300 63.500h4.800M246.800 62l-1.500 1.500l1.500 1.500" fill="none" stroke="#8c8c8c" stroke-width="1"/>
<!-- tab php icon -->
<g transform="translate(264.700 59.500)"><path d="M1 .6h4.600l2.800 2.800v6.900h-7.400z" fill="none" stroke="#9e9e9e" stroke-width="1.100"/><path d="M5.600 .6v2.800h2.800" fill="none" stroke="#9e9e9e" stroke-width=".9"/><rect x=".5" y="3.800" width="9.500" height="5" fill="#b5a9f3"/><text x="5.200" y="7.900" font-size="5.200" font-weight="bold" text-anchor="middle" fill="#3b2c86" font-family="Liberation Sans, sans-serif">php</text></g>
<!-- tab close -->
<path d="M334 62.900l4.400 4.400M338.400 62.900l-4.400 4.400" stroke="#5c5c5c" stroke-width="1"/>
</svg>

<div id="editor">
<div id="curline"></div>
<div id="gutter"></div>
<div id="curgut"></div>
<div id="caret"></div>
<div id="margin"></div>
<div id="edthumb" style="position:absolute;left:766.600px;top:12.200px;width:2px;height:37.400px;background:#b9b9b9"></div>
<div id="stripe" style="position:absolute;left:764.800px;top:2.900px;width:1.700px;height:5px;background:#7d7d7d"></div>
<svg class="fold" style="top:24.88px" width="7" height="8" viewBox="0 0 7 8"><path d="M.5 .5h6v4l-3 3l-3-3z" fill="#fff" stroke="#bcbcbc"/><path d="M2 3.5h3" stroke="#a6a6a6"/></svg>
<svg class="fold" style="top:91.12px" width="7" height="8" viewBox="0 0 7 8"><path d="M.5 .5h6v4l-3 3l-3-3z" fill="#fff" stroke="#bcbcbc"/><path d="M2 3.5h3" stroke="#a6a6a6"/></svg>
<svg class="fold" style="top:146.32px" width="7" height="8" viewBox="0 0 7 8"><path d="M.5 .5h6v4l-3 3l-3-3z" fill="#fff" stroke="#bcbcbc"/><path d="M2 3.5h3" stroke="#a6a6a6"/></svg>
<svg class="fold" style="top:212.56px" width="7" height="8" viewBox="0 0 7 8"><path d="M.5 .5h6v4l-3 3l-3-3z" fill="#fff" stroke="#bcbcbc"/><path d="M2 3.5h3" stroke="#a6a6a6"/></svg>
<svg class="fold" style="top:245.68px" width="7" height="8" viewBox="0 0 7 8"><path d="M.5 .5h6v4l-3 3l-3-3z" fill="#fff" stroke="#bcbcbc"/><path d="M2 3.5h3" stroke="#a6a6a6"/></svg>
<svg class="fold" style="top:322.96px" width="7" height="8" viewBox="0 0 7 8"><path d="M.5 .5h6v4l-3 3l-3-3z" fill="#fff" stroke="#bcbcbc"/><path d="M2 3.5h3" stroke="#a6a6a6"/></svg>
<svg class="fold" style="top:334.00px" width="7" height="8" viewBox="0 0 7 8"><path d="M.5 .5h6v4l-3 3l-3-3z" fill="#fff" stroke="#bcbcbc"/><path d="M2 3.5h3" stroke="#a6a6a6"/></svg>
<svg class="fold" style="top:400.24px" width="7" height="8" viewBox="0 0 7 8"><path d="M.5 .5h6v4l-3 3l-3-3z" fill="#fff" stroke="#bcbcbc"/><path d="M2 3.5h3" stroke="#a6a6a6"/></svg>
<svg class="fold" style="top:455.44px" width="7" height="8" viewBox="0 0 7 8"><path d="M.5 .5h6v4l-3 3l-3-3z" fill="#fff" stroke="#bcbcbc"/><path d="M2 3.5h3" stroke="#a6a6a6"/></svg>
<svg class="fold" style="top:68.04px" width="7" height="8" viewBox="0 0 7 8"><path d="M.5 7.5h6v-4l-3-3l-3 3z" fill="#fff" stroke="#bcbcbc"/><path d="M2 4.5h3" stroke="#a6a6a6"/></svg>
<svg class="fold" style="top:112.20px" width="7" height="8" viewBox="0 0 7 8"><path d="M.5 7.5h6v-4l-3-3l-3 3z" fill="#fff" stroke="#bcbcbc"/><path d="M2 4.5h3" stroke="#a6a6a6"/></svg>
<svg class="fold" style="top:167.40px" width="7" height="8" viewBox="0 0 7 8"><path d="M.5 7.5h6v-4l-3-3l-3 3z" fill="#fff" stroke="#bcbcbc"/><path d="M2 4.5h3" stroke="#a6a6a6"/></svg>
<svg class="fold" style="top:233.64px" width="7" height="8" viewBox="0 0 7 8"><path d="M.5 7.5h6v-4l-3-3l-3 3z" fill="#fff" stroke="#bcbcbc"/><path d="M2 4.5h3" stroke="#a6a6a6"/></svg>
<svg class="fold" style="top:310.92px" width="7" height="8" viewBox="0 0 7 8"><path d="M.5 7.5h6v-4l-3-3l-3 3z" fill="#fff" stroke="#bcbcbc"/><path d="M2 4.5h3" stroke="#a6a6a6"/></svg>
<svg class="fold" style="top:355.08px" width="7" height="8" viewBox="0 0 7 8"><path d="M.5 7.5h6v-4l-3-3l-3 3z" fill="#fff" stroke="#bcbcbc"/><path d="M2 4.5h3" stroke="#a6a6a6"/></svg>
<svg class="fold" style="top:366.12px" width="7" height="8" viewBox="0 0 7 8"><path d="M.5 7.5h6v-4l-3-3l-3 3z" fill="#fff" stroke="#bcbcbc"/><path d="M2 4.5h3" stroke="#a6a6a6"/></svg>
<svg class="fold" style="top:443.40px" width="7" height="8" viewBox="0 0 7 8"><path d="M.5 7.5h6v-4l-3-3l-3 3z" fill="#fff" stroke="#bcbcbc"/><path d="M2 4.5h3" stroke="#a6a6a6"/></svg>
<svg class="fold" style="top:476.52px" width="7" height="8" viewBox="0 0 7 8"><path d="M.5 7.5h6v-4l-3-3l-3 3z" fill="#fff" stroke="#bcbcbc"/><path d="M2 4.5h3" stroke="#a6a6a6"/></svg>
<div class="cl" style="top:0.80px"><b class="k">&lt;?php</b></div>
<div class="cl" style="top:11.84px"><i class="c">/* vim: set expandtab sw=4 ts=4 sts=4: */</i></div>
<div class="cl" style="top:22.88px"><i class="c">/**</i></div>
<div class="cl" style="top:33.92px"><i class="c"> * Main loader script</i></div>
<div class="cl" style="top:44.96px"><i class="c"> *</i></div>
<div class="cl" style="top:56.00px"><i class="c"> * <b class="t">@package</b> PhpMyAdmin</i></div>
<div class="cl" style="top:67.04px"><i class="c"> */</i></div>
<div class="cl" style="top:78.08px"></div>
<div class="cl" style="top:89.12px"><i class="c">/**</i></div>
<div class="cl" style="top:100.16px"><i class="c"> * Gets some core libraries and displays a top message if required</i></div>
<div class="cl" style="top:111.20px"><i class="c"> */</i></div>
<div class="cl" style="top:122.24px"><b class="k">require_once</b> <b class="s">&#x27;libraries/common.inc.php&#x27;</b>;</div>
<div class="cl" style="top:133.28px"></div>
<div class="cl" style="top:144.32px"><i class="c">/**</i></div>
<div class="cl" style="top:155.36px"><i class="c"> * display Git revision if requested</i></div>
<div class="cl" style="top:166.40px"><i class="c"> */</i></div>
<div class="cl" style="top:177.44px"><b class="k">require_once</b> <b class="s">&#x27;libraries/display_git_revision.lib.php&#x27;</b>;</div>
<div class="cl" style="top:188.48px"><b class="k">require_once</b> <b class="s">&#x27;libraries/Template.class.php&#x27;</b>;</div>
<div class="cl" style="top:199.52px"></div>
<div class="cl" style="top:210.56px"><i class="c">/**</i></div>
<div class="cl" style="top:221.60px"><i class="c"> * pass variables to child pages</i></div>
<div class="cl" style="top:232.64px"><i class="c"> */</i></div>
<div class="cl" style="top:243.68px"><span class="v">$drops</span> = <b class="k">array</b>(</div>
<div class="cl" style="top:254.72px">    <b class="s">&#x27;lang&#x27;</b>,</div>
<div class="cl" style="top:265.76px">    <b class="s">&#x27;server&#x27;</b>,</div>
<div class="cl" style="top:276.80px">    <b class="s">&#x27;collation_connection&#x27;</b>,</div>
<div class="cl" style="top:287.84px">    <b class="s">&#x27;db&#x27;</b>,</div>
<div class="cl" style="top:298.88px">    <b class="s">&#x27;table&#x27;</b></div>
<div class="cl" style="top:309.92px">);</div>
<div class="cl" style="top:320.96px"><b class="k">foreach</b> (<span class="v">$drops</span> <b class="k">as</b> <span class="v">$each_drop</span>) {</div>
<div class="cl" style="top:332.00px">    <b class="k">if</b> (<i class="f">array_key_exists</i>(<span class="v">$each_drop</span>, <span class="v">$_GET</span>)) {</div>
<div class="cl" style="top:343.04px">        <b class="k">unset</b>(<span class="v">$_GET</span>[<span class="v">$each_drop</span>]);</div>
<div class="cl" style="top:354.08px">    }</div>
<div class="cl" style="top:365.12px">}</div>
<div class="cl" style="top:376.16px"><b class="k">unset</b>(<span class="v">$drops</span>, <span class="v">$each_drop</span>);</div>
<div class="cl" style="top:387.20px"></div>
<div class="cl" style="top:398.24px"><i class="c">/*</i></div>
<div class="cl" style="top:409.28px"><i class="c"> * Black list of all scripts to which front-end must submit data.</i></div>
<div class="cl" style="top:420.32px"><i class="c"> * Such scripts must not be loaded on home page.</i></div>
<div class="cl" style="top:431.36px"><i class="c"> *</i></div>
<div class="cl" style="top:442.40px"><i class="c"> */</i></div>
<div class="cl" style="top:453.44px"><span class="v">$target_blacklist</span> = <b class="k">array</b> (</div>
<div class="cl" style="top:464.48px">    <b class="s">&#x27;import.php&#x27;</b>, <b class="s">&#x27;export.php&#x27;</b></div>
<div class="cl" style="top:475.52px">);</div>
<div class="cl" style="top:486.56px"></div>
<div class="cl" style="top:497.60px"><i class="c">// If we have a valid target, let&#x27;s load that script instead</i></div>
<div class="cl" style="top:508.64px"><b class="k">if</b> (! <b class="k">empty</b>(<span class="v">$_REQUEST</span>[<b class="s">&#x27;target&#x27;</b>])</div>
<div class="cl" style="top:519.68px">    &amp;&amp; <i class="f">is_string</i>(<span class="v">$_REQUEST</span>[<b class="s">&#x27;target&#x27;</b>])</div>
<div class="cl" style="top:530.72px">    &amp;&amp; ! <i class="f">preg_match</i>(<b class="s">&#x27;/^index/&#x27;</b>, <span class="v">$_REQUEST</span>[<b class="s">&#x27;target&#x27;</b>])</div>
<div class="cl" style="top:541.76px">    &amp;&amp; ! <i class="f">in_array</i>(<span class="v">$_REQUEST</span>[<b class="s">&#x27;target&#x27;</b>], <span class="v">$target_blacklist</span>)</div>
<div class="cl" style="top:552.80px">    &amp;&amp; <i class="f">in_array</i>(<span class="v">$_REQUEST</span>[<b class="s">&#x27;target&#x27;</b>], <span class="v">$goto_whitelist</span>)</div>
<div class="cl" style="top:563.84px">) {</div>
</div>
<div id="status">
<span style="left:468.3px;letter-spacing:-.3px">Indexing...</span>
<span style="left:894.8px">1:1</span>
<span style="left:917.9px">LF</span>
<span style="left:939.8px">UTF-8</span>
</div>
<svg id="sticons" width="1024" height="13" viewBox="0 654 1024 13" style="position:absolute;left:0;top:654px">
<!-- tool windows quick access -->
<rect x="3.500" y="657.800" width="9.500" height="7.800" fill="#c9c9c9" stroke="#5e5e5e" stroke-width="1"/>
<path d="M5 657.800v7.800M11.500 657.800v7.800" stroke="#6e6e6e" stroke-width=".8"/>
<!-- separator before process -->
<rect x="452" y="655" width="1" height="12" fill="#f6f6f6"/>
<rect x="451" y="655" width="1" height="12" fill="#cfcfcf"/>
<!-- spinner -->
<g transform="translate(459.300 662.600)" stroke-linecap="round" stroke-width="1.100">
<path d="M0-4v2" stroke="#7a7a7a"/><path d="M2.800-2.800l-1.400 1.400" stroke="#8c8c8c"/><path d="M4 0h-2" stroke="#9c9c9c"/><path d="M2.800 2.800l-1.400-1.400" stroke="#adadad"/>
<path d="M0 4v-2" stroke="#bcbcbc"/><path d="M-2.800 2.800l1.400-1.400" stroke="#c8c8c8"/><path d="M-4 0h2" stroke="#d2d2d2"/><path d="M-2.800-2.800l1.400 1.400" stroke="#dadada"/>
</g>
<!-- progress -->
<rect x="776.500" y="658.500" width="106" height="7" rx="3.500" fill="#f7f7f7" stroke="#9c9c9c"/>
<rect x="778" y="660" width="12" height="4.200" rx="2.100" fill="#9a9a9a"/>
<!-- separators -->
<g fill="#cdcdcd"><rect x="889.500" y="655" width="1" height="12"/><rect x="914.500" y="655" width="1" height="12"/><rect x="936" y="655" width="1" height="12"/><rect x="977" y="655" width="1" height="12"/></g>
<!-- LF / UTF-8 arrows -->
<path d="M929.200 661.800h3l-1.500-2zM929.200 663.300h3l-1.500 2z" fill="#4a4a4a"/>
<path d="M970 661.800h3l-1.500-2zM970 663.300h3l-1.500 2z" fill="#4a4a4a"/>
<!-- lock -->
<rect x="984.300" y="662.300" width="4.600" height="3.700" fill="#e4e4e4" stroke="#8a8a8a" stroke-width="1"/>
<path d="M983.300 662v-1.200a1.500 1.500 0 0 1 3 0v1.200" fill="none" stroke="#9a9a9a" stroke-width="1"/>
<!-- hector -->
<g fill="none" stroke="#8e8e8e" stroke-width="1">
<path d="M999.500 661.500a3.500 3.800 0 0 1 7 0"/><path d="M998.700 661.700h8.600"/><ellipse cx="1003" cy="664.500" rx="3.300" ry="3"/><path d="M1000.200 663.800h5.600"/>
</g>
<!-- notifications bubble -->
<path d="M1016.700 659h7.300v6.500h-4.500l-1.800 1.500v-1.500h-1q-1.500 0-1.500-1.500v-3.500q0-1.500 1.500-1.500z" fill="#bdbdbd"/>
</svg>

</body></html>
